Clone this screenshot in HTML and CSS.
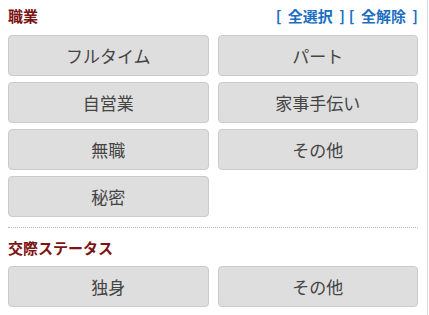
FILE: index.html
```html
<!DOCTYPE html>
<html lang="ja">
<head>
<meta charset="utf-8">
<link rel="stylesheet" href="styles.css">
</head>
<body>
<div class="panel">
  <section class="group">
    <div class="group-head">
      <h2 class="group-title">職業</h2>
      <div class="group-links"><a href="#">[ 全選択 ]</a><a href="#">[ 全解除 ]</a></div>
    </div>
    <div class="options">
      <button class="opt">フルタイム</button>
      <button class="opt">パート</button>
      <button class="opt">自営業</button>
      <button class="opt">家事手伝い</button>
      <button class="opt">無職</button>
      <button class="opt">その他</button>
      <button class="opt">秘密</button>
    </div>
  </section>
  <section class="group group-sep">
    <div class="group-head">
      <h2 class="group-title">交際ステータス</h2>
    </div>
    <div class="options">
      <button class="opt">独身</button>
      <button class="opt">その他</button>
    </div>
  </section>
</div>
</body>
</html>
```
FILE: styles.css
```css
html, body {
  margin: 0;
  padding: 0;
  background: #fff;
}
body {
  font-family: "Noto Sans CJK JP", "Noto Sans", sans-serif;
}
.panel {
  width: 410px;
  padding: 6px 9px 20px 8px;
  border-right: 1px solid #d8d8d8;
  min-height: 300px;
}
.group-head {
  display: flex;
  justify-content: space-between;
  align-items: center;
  height: 20px;
  margin-bottom: 9px;
}
.group-title {
  margin: 0;
  font-size: 15px;
  font-weight: bold;
  color: #7b1414;
  line-height: 20px;
}
.group-links {
  display: flex;
  gap: 4px;
  font-size: 15px;
  font-weight: bold;
  line-height: 20px;
}
.group-links a {
  color: #1b6ec2;
  text-decoration: none;
  word-spacing: 3px;
}
.options {
  display: grid;
  grid-template-columns: 1fr 1fr;
  column-gap: 9px;
  row-gap: 6px;
}
.opt {
  height: 41px;
  margin: 0;
  padding: 0;
  background: #dedede;
  border: 1px solid #cbcbcb;
  border-radius: 4px;
  font-family: "Noto Sans CJK JP", "Noto Sans", sans-serif;
  font-size: 17px;
  color: #444;
}
.group-sep {
  margin-top: 10px;
  padding-top: 10px;
  border-top: 1px dotted #b8b8b8;
}
.group-sep .group-head {
  margin-bottom: 8px;
}
```
